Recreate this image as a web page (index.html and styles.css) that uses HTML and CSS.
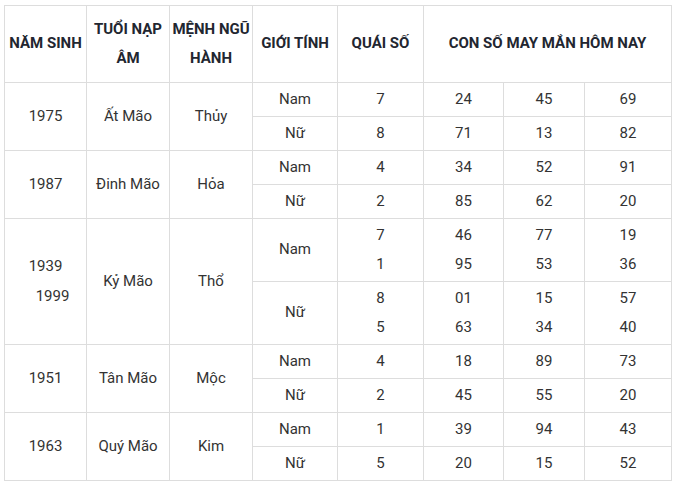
FILE: index.html
```html
<!DOCTYPE html>
<html lang="vi">
<head>
<meta charset="utf-8">
<link rel="stylesheet" href="styles.css">
</head>
<body>
<table class="lucky">
  <colgroup>
    <col class="c1"><col class="c2"><col class="c3"><col class="c4"><col class="c5"><col class="c6"><col class="c7"><col class="c8">
  </colgroup>
  <thead>
    <tr class="head">
      <th>NĂM SINH</th>
      <th>TUỔI NẠP ÂM</th>
      <th>MỆNH NGŨ HÀNH</th>
      <th>GIỚI TÍNH</th>
      <th>QUÁI SỐ</th>
      <th colspan="3">CON SỐ MAY MẮN HÔM NAY</th>
    </tr>
  </thead>
  <tbody>
    <tr class="r"><td rowspan="2">1975</td><td rowspan="2">Ất Mão</td><td rowspan="2">Thủy</td><td>Nam</td><td>7</td><td>24</td><td>45</td><td>69</td></tr>
    <tr class="r"><td>Nữ</td><td>8</td><td>71</td><td>13</td><td>82</td></tr>
    <tr class="r"><td rowspan="2">1987</td><td rowspan="2">Đinh Mão</td><td rowspan="2">Hỏa</td><td>Nam</td><td>4</td><td>34</td><td>52</td><td>91</td></tr>
    <tr class="r"><td>Nữ</td><td>2</td><td>85</td><td>62</td><td>20</td></tr>
    <tr class="rr"><td rowspan="2">1939<br><span class="indent">1999</span></td><td rowspan="2">Kỷ Mão</td><td rowspan="2">Thổ</td><td>Nam</td><td>7<br>1</td><td>46<br>95</td><td>77<br>53</td><td>19<br>36</td></tr>
    <tr class="rr"><td>Nữ</td><td>8<br>5</td><td>01<br>63</td><td>15<br>34</td><td>57<br>40</td></tr>
    <tr class="r"><td rowspan="2">1951</td><td rowspan="2">Tân Mão</td><td rowspan="2">Mộc</td><td>Nam</td><td>4</td><td>18</td><td>89</td><td>73</td></tr>
    <tr class="r"><td>Nữ</td><td>2</td><td>45</td><td>55</td><td>20</td></tr>
    <tr class="r"><td rowspan="2">1963</td><td rowspan="2">Quý Mão</td><td rowspan="2">Kim</td><td>Nam</td><td>1</td><td>39</td><td>94</td><td>43</td></tr>
    <tr class="r"><td>Nữ</td><td>5</td><td>20</td><td>15</td><td>52</td></tr>
  </tbody>
</table>
</body>
</html>
```
FILE: styles.css
```css
html, body {
  margin: 0;
  padding: 0;
  background: #ffffff;
}
body {
  padding: 5px 0 0 4px;
  font-family: Roboto, "Liberation Sans", Arial, sans-serif;
}
.lucky {
  border-collapse: collapse;
  table-layout: fixed;
  width: 668px;
  font-size: 15px;
  color: #333333;
}
.c1 { width: 82px; }
.c2 { width: 83px; }
.c3 { width: 83px; }
.c4 { width: 85px; }
.c5 { width: 86px; }
.c6 { width: 80px; }
.c7 { width: 81px; }
.c8 { width: 87px; }
.lucky th,
.lucky td {
  border: 1px solid #dddddd;
  text-align: center;
  vertical-align: middle;
  padding: 0 2px;
  line-height: 29.5px;
}
.lucky th {
  font-weight: 700;
  color: #222630;
}
.head { height: 77px; }
.r { height: 34px; }
.rr { height: 63px; }
.indent {
  padding-left: 14px;
}
```
